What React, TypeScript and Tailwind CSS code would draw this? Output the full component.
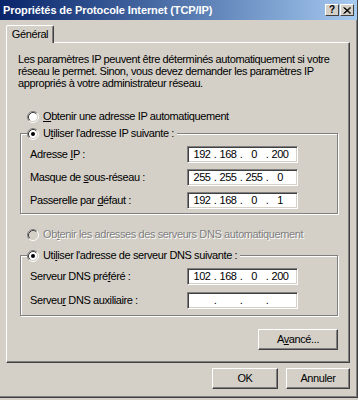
import type { ReactNode } from "react";

type IpValue = [string, string, string, string];

function Radio({ checked, disabled }: { checked?: boolean; disabled?: boolean }) {
  return (
    <svg width="12" height="12" viewBox="0 0 12 12" className="shrink-0">
      <circle cx="6" cy="6" r="4.2" fill={disabled ? "#d4d0c8" : "#fff"} />
      <path d="M2.11 9.89 A5.5 5.5 0 0 1 9.89 2.11" fill="none" stroke="#808080" />
      <path d="M9.89 2.11 A5.5 5.5 0 0 1 2.11 9.89" fill="none" stroke="#fff" />
      <path d="M2.82 9.18 A4.5 4.5 0 0 1 9.18 2.82" fill="none" stroke="#404040" />
      <path d="M9.18 2.82 A4.5 4.5 0 0 1 2.82 9.18" fill="none" stroke="#d4d0c8" />
      {checked && <circle cx="6" cy="6" r="2" fill="#000" />}
    </svg>
  );
}

function Mnemonic({ before, letter, after }: { before: string; letter: string; after: string }) {
  return (
    <span>
      {before}
      <span className="underline underline-offset-[1px]">{letter}</span>
      {after}
    </span>
  );
}

function RadioRow({ checked, disabled, children }: { checked?: boolean; disabled?: boolean; children: ReactNode }) {
  return (
    <div className="flex h-[13px] items-center gap-[4px]">
      <Radio checked={checked} disabled={disabled} />
      <span className={disabled ? "text-[#808080] [text-shadow:1px_1px_0_#fff]" : ""}>{children}</span>
    </div>
  );
}

function IpBox({ value }: { value?: IpValue }) {
  const parts = value ?? ["", "", "", ""];
  return (
    <div className="flex h-[17px] w-[111px] items-center border border-t-[#808080] border-l-[#808080] border-r-white border-b-white bg-white pl-[3px] shadow-[inset_1px_1px_0_#404040,inset_-1px_-1px_0_#d4d0c8]">
      {parts.map((part, i) => (
        <div key={i} className="flex">
          <span className="w-[22px] text-center">{part}</span>
          {i < 3 && <span className="w-[4px] text-center">.</span>}
        </div>
      ))}
    </div>
  );
}

function FieldRow({ label, value }: { label: ReactNode; value?: IpValue }) {
  return (
    <div className="flex h-[17px] items-center">
      <span className="w-[157px]">{label}</span>
      <IpBox value={value} />
    </div>
  );
}

function Button({ children, width }: { children: ReactNode; width: string }) {
  return (
    <div
      className={`flex h-[21px] items-center justify-center border border-t-white border-l-white border-r-[#404040] border-b-[#404040] shadow-[inset_-1px_-1px_0_#808080] ${width}`}
    >
      {children}
    </div>
  );
}

function GroupBox({ legend, children, className }: { legend: ReactNode; children: ReactNode; className: string }) {
  return (
    <fieldset
      className={`flex flex-col border border-[#808080] pl-[9px] shadow-[inset_1px_1px_0_#fff,1px_1px_0_#fff] ${className}`}
    >
      <legend className="-ml-[3px] bg-[#d4d0c8] pr-[3px]">{legend}</legend>
      {children}
    </fieldset>
  );
}

export default function App() {
  return (
    <div className="relative h-[400px] w-[358px] overflow-hidden bg-[#d4d0c8] font-['Liberation_Sans',Arial,sans-serif] text-[11px] leading-[13px] tracking-[-0.4px] text-black">
      <div className="flex h-[398px] flex-col border-r border-b border-r-[#404040] border-b-[#404040] shadow-[inset_-1px_-1px_0_#808080]">
        {/* title bar */}
        <div className="flex h-[20px] items-center justify-between bg-gradient-to-r from-[#0a246a] to-[#a6caf0] pr-[3px] pl-[3px]">
          <span className="text-[11px] font-bold tracking-[-0.1px] text-white">Propriétés de Protocole Internet (TCP/IP)</span>
          <div className="flex gap-[1px]">
            <div className="flex h-[12px] w-[14px] items-center justify-center border border-t-white border-l-white border-r-[#404040] border-b-[#404040] bg-[#d4d0c8] text-[10px] leading-none font-bold tracking-normal">
              ?
            </div>
            <div className="flex h-[12px] w-[14px] items-center justify-center border border-t-white border-l-white border-r-[#404040] border-b-[#404040] bg-[#d4d0c8]">
              <svg width="8" height="7" viewBox="0 0 8 7">
                <path d="M0.5 0.5 L7 6.5 M1.5 0.5 L8 6.5 M7 0.5 L0.5 6.5 M8 0.5 L1.5 6.5" stroke="#000" strokeWidth="1" />
              </svg>
            </div>
          </div>
        </div>

        {/* tab strip */}
        <div className="mt-[5px] flex pl-[6px]">
          <div className="relative z-10 -mb-[1px] flex h-[18px] w-[48px] items-center justify-center rounded-tl-[2px] rounded-tr-[2px] border border-b-0 border-t-white border-l-white border-r-[#404040] bg-[#d4d0c8] shadow-[inset_-1px_0_0_#808080]">
            Général
          </div>
        </div>

        {/* panel */}
        <div className="mx-[6px] flex h-[321px] w-[344px] flex-col border border-t-white border-l-white border-r-[#404040] border-b-[#404040] pt-[10px] pr-[11px] pl-[13px] shadow-[inset_-1px_-1px_0_#808080]">
          <p className="-ml-[2px] leading-[12px]">
            Les paramètres IP peuvent être déterminés automatiquement si votre
            <br />
            réseau le permet. Sinon, vous devez demander les paramètres IP
            <br />
            appropriés à votre administrateur réseau.
          </p>

          <div className="mt-[21px] ml-[7px]">
            <RadioRow>
              <Mnemonic before="" letter="O" after="btenir une adresse IP automatiquement" />
            </RadioRow>
          </div>

          <GroupBox
            className="mt-[4px] gap-[6px] pt-[6px] pb-[4px]"
            legend={
              <RadioRow checked>
                <Mnemonic before="U" letter="t" after="iliser l'adresse IP suivante :" />
              </RadioRow>
            }
          >
            <FieldRow label={<Mnemonic before="Adresse " letter="I" after="P :" />} value={["192", "168", "0", "200"]} />
            <FieldRow label={<Mnemonic before="Masque de " letter="s" after="ous-réseau :" />} value={["255", "255", "255", "0"]} />
            <FieldRow label={<Mnemonic before="Passerelle par " letter="d" after="éfaut :" />} value={["192", "168", "0", "1"]} />
          </GroupBox>

          <div className="mt-[14px] ml-[7px]">
            <RadioRow disabled>
              <Mnemonic before="Ob" letter="t" after="enir les adresses des serveurs DNS automatiquement" />
            </RadioRow>
          </div>

          <GroupBox
            className="mt-[8px] gap-[7px] pt-[6px] pb-[6px]"
            legend={
              <RadioRow checked>
                <Mnemonic before="Uti" letter="l" after="iser l'adresse de serveur DNS suivante :" />
              </RadioRow>
            }
          >
            <FieldRow label={<Mnemonic before="Serveur DNS pré" letter="f" after="éré :" />} value={["102", "168", "0", "200"]} />
            <FieldRow label={<Mnemonic before="Serveu" letter="r" after=" DNS auxiliaire :" />} />
          </GroupBox>

          <div className="mt-[13px] flex justify-end">
            <Button width="w-[80px]">
              <Mnemonic before="A" letter="v" after="ancé..." />
            </Button>
          </div>
        </div>

        {/* dialog buttons */}
        <div className="mt-[5px] flex justify-end gap-[8px] pr-[7px]">
          <Button width="w-[66px]">OK</Button>
          <Button width="w-[64px]">Annuler</Button>
        </div>
      </div>
    </div>
  );
}
